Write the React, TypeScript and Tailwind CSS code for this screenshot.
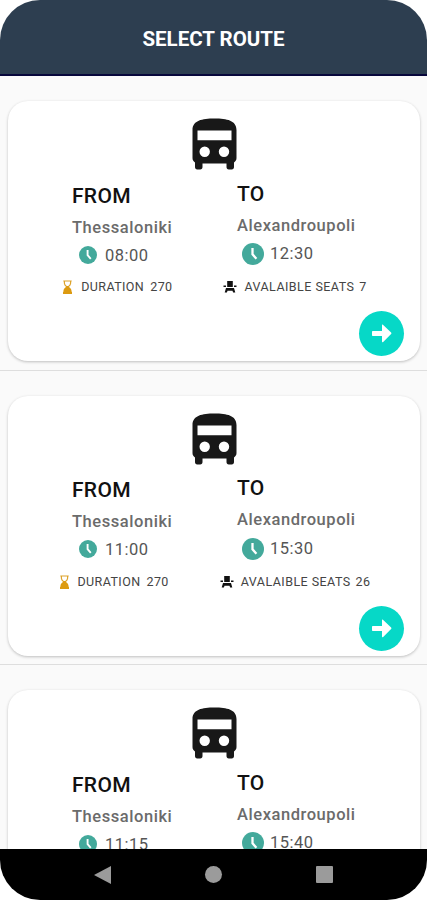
type Route = {
  from: string;
  to: string;
  departure: string;
  arrival: string;
  duration: number;
  seats: number;
};

const routes: Route[] = [
  { from: "Thessaloniki", to: "Alexandroupoli", departure: "08:00", arrival: "12:30", duration: 270, seats: 7 },
  { from: "Thessaloniki", to: "Alexandroupoli", departure: "11:00", arrival: "15:30", duration: 270, seats: 26 },
  { from: "Thessaloniki", to: "Alexandroupoli", departure: "11:15", arrival: "15:40", duration: 265, seats: 18 },
];

function BusIcon() {
  return (
    <svg className="mx-auto block h-[52px] w-[45px]" viewBox="0 0 45 52" fill="#181818">
      <path
        fillRule="evenodd"
        d="M22.500 0.500C35 .5 44.500 2.500 44.500 12v28c0 2-.9 3.400-2.500 4.500V49c0 1.500-.8 2.500-2.300 2.500h-2.900c-1.500 0-2.300-1-2.300-2.500v-3.500h-24V49c0 1.500-.8 2.500-2.300 2.500H5.300C3.800 51.500 3 50.500 3 49v-4.500C1.400 43.400.5 42 .5 40V12C.5 2.500 10 .5 22.500.5ZM5.500 12.500v9.700h34V12.500ZM12.700 28.500a5.200 5.200 0 1 0 0 10.400 5.200 5.200 0 0 0 0-10.400Zm19.300 0a5.200 5.200 0 1 0 0 10.400 5.200 5.200 0 0 0 0-10.400Z"
      />
    </svg>
  );
}

function ClockIcon({ className }: { className: string }) {
  return (
    <svg className={className} viewBox="0 0 22 22">
      <circle cx="11" cy="11" r="11" fill="#43a99b" />
      <path d="M10.500 5v6.200l3.900 4.500" fill="none" stroke="#fff" strokeWidth="2.300" />
    </svg>
  );
}

function HourglassIcon() {
  return (
    <svg className="h-[14px] w-[9px]" viewBox="0 0 9 14">
      <path d="M.3 1h8.400M1.400 1v2.200c0 1.700 1.300 2.700 2.400 3.600M7.600 1v2.200c0 1.700-1.300 2.700-2.400 3.600" fill="none" stroke="#dda32c" strokeWidth="1.200" />
      <path d="M3.500 6h2c.3 1.500 3 2.300 3 4.800v1H9V14H0v-2.200h.5v-1C.5 8.300 3.200 7.500 3.500 6Z" fill="#dc9a10" />
    </svg>
  );
}

function SeatIcon() {
  return (
    <svg className="h-3 w-[14px]" viewBox="0 0 14 12" fill="#111">
      <path d="M4.200 0h5.600v6H4.200ZM.5 4.500H3v1.500H.5ZM11 4.500h2.500v1.500H11ZM3 7h8l1.300 4.500h-2.200L9.500 9.700h-5l-.6 1.800H1.700Z" />
    </svg>
  );
}

function RouteItem({ route }: { route: Route }) {
  return (
    <li className="h-[294.5px] border-b border-[#dedede] pt-[25px] pr-[7px] pl-2">
      <div className="h-[260px] rounded-[20px] bg-white pt-[17px] shadow-[0_1px_3px_rgba(0,0,0,0.24)]">
        <BusIcon />
        <div className="flex pl-16">
          <div className="w-[165px] pt-[13.5px]">
            <h2 className="text-[21px] leading-6 font-medium tracking-[0.3px] text-[#111]">FROM</h2>
            <p className="mt-[10px] text-[16.500px] leading-5 font-medium tracking-[0.55px] text-[#6b6b6b]">{route.from}</p>
            <div className="mt-[7px] ml-[7px] flex h-5 items-center">
              <ClockIcon className="h-[18px] w-[18px]" />
              <span className="relative top-px ml-2 text-[16.500px] leading-5 tracking-[0.5px] text-[#555]">{route.departure}</span>
            </div>
          </div>
          <div className="pt-[11.5px]">
            <h2 className="text-[21px] leading-6 font-medium tracking-[0.3px] text-[#111]">TO</h2>
            <p className="mt-[10px] text-[16.500px] leading-5 font-medium tracking-[0.55px] text-[#6b6b6b]">{route.to}</p>
            <div className="mt-[7.5px] ml-[5px] flex h-[22px] items-center">
              <ClockIcon className="h-[22px] w-[22px]" />
              <span className="ml-[6px] text-[16.500px] leading-5 tracking-[0.5px] text-[#555]">{route.arrival}</span>
            </div>
          </div>
        </div>
        <div className="mt-[14px] flex h-4 items-center justify-center gap-[51px] pl-[2px] text-[12.500px] leading-4 tracking-[0.4px] text-[#444]">
          <div className="flex items-center">
            <HourglassIcon />
            <span className="ml-[9px]">DURATION</span>
            <span className="ml-[6px]">{route.duration}</span>
          </div>
          <div className="flex items-center">
            <SeatIcon />
            <span className="ml-[7px] tracking-[0.45px]">AVALAIBLE SEATS</span>
            <span className="ml-[5px]">{route.seats}</span>
          </div>
        </div>
        <button
          type="button"
          className="mt-4 mr-4 ml-auto flex h-[45px] w-[45px] items-center justify-center rounded-full bg-[#06d8c7]"
        >
          <svg className="h-[19px] w-5" viewBox="0 0 20 19" fill="#fff">
            <path d="M1 7h9V1.300C10 .4 10.600.3 11.200.9l7.900 7.700c.5.500.5 1 0 1.500l-7.900 7.800c-.6.600-1.200.4-1.200-.4V12H1c-.6 0-1-.4-1-1V8c0-.6.4-1 1-1Z" />
          </svg>
        </button>
      </div>
    </li>
  );
}

export default function App() {
  return (
    <div className="h-[900px] w-[427px] bg-white font-[Roboto,sans-serif]">
      <div className="flex h-full flex-col overflow-hidden rounded-[40px] bg-[#fafafa]">
        <header className="flex h-[76px] shrink-0 items-center justify-center border-b-2 border-[#07073b] bg-[#2d3e50] pt-1">
          <h1 className="text-[20.500px] font-bold text-white">SELECT ROUTE</h1>
        </header>
        <ul className="min-h-0 flex-1 overflow-hidden">
          {routes.map((route) => (
            <RouteItem key={route.departure} route={route} />
          ))}
        </ul>
        <nav className="flex h-[51px] shrink-0 items-center justify-between bg-black pr-[94px] pl-[94px]">
          <svg className="h-[18px] w-[17px]" viewBox="0 0 17 18" fill="#9b9b9b">
            <path d="M17 0v18L0 9Z" />
          </svg>
          <div className="h-[17px] w-[17px] rounded-full bg-[#9b9b9b]" />
          <div className="h-[17px] w-[17px] rounded-[1px] bg-[#9b9b9b]" />
        </nav>
      </div>
    </div>
  );
}
